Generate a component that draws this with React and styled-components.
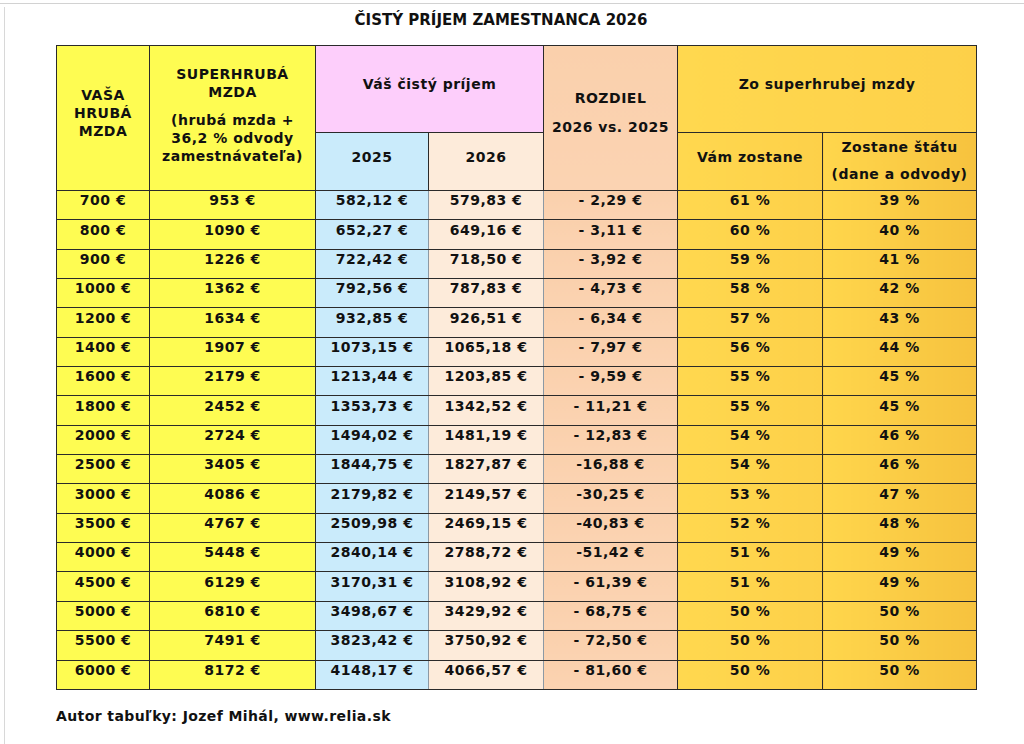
import React from "react";
import styled, { createGlobalStyle } from "styled-components";

const GlobalStyle = createGlobalStyle`
  body {
    margin: 0;
    background: #fff;
    font-family: "DejaVu Sans", Verdana, sans-serif;
    color: #111;
  }
`;

const colors = {
  yellow: "#FEFC52",
  pink: "#FDCEFB",
  blue: "#CAEBFB",
  cream: "#FDEBDA",
  peach: "linear-gradient(180deg, #FAD0AC, #FBD3B2)",
  gold: "linear-gradient(90deg, #FFD84F, #FDD049)",
  goldDark: "linear-gradient(90deg, #FFD64C, #F6C23E)",
};

const Frame = styled.div`
  margin-top: 3px;
  border-top: 1px solid #d2d2d2;
`;

const Sheet = styled.div`
  margin: 3px 0 0 4px;
  height: 737px;
  border-left: 1px solid #d8d8d8;
  padding-left: 51px;
  box-sizing: border-box;
`;

const Title = styled.h1`
  width: 890px;
  margin: 0;
  padding-top: 4px;
  margin-bottom: 16px;
  font-size: 15px;
  line-height: 18px;
  font-weight: bold;
  text-align: center;
`;

const Table = styled.table`
  width: 920px;
  table-layout: fixed;
  border-collapse: collapse;
  border: 1px solid #2a2a2a;
  font-size: 14px;
  font-weight: bold;
  letter-spacing: 0.5px;
`;

const HeadCell = styled.th`
  background: ${(p) => colors[p.$bg]};
  border: 1px solid #2a2a2a;
  height: ${(p) => p.$h || 47}px;
  padding: 0 4px ${(p) => (p.$pb !== undefined ? p.$pb : 10)}px;
  text-align: center;
  vertical-align: middle;
  font-size: 14px;
  line-height: ${(p) => p.$lh || 18}px;
`;

const Block = styled.div`
  & + & {
    margin-top: 10px;
  }
`;

const Cell = styled.td`
  background: ${(p) => colors[p.$bg]};
  border-top: 1px solid #2a2a2a;
  border-bottom: 1px solid #2a2a2a;
  border-left: 1px solid ${(p) => (p.$soft ? "#8c99a4" : "#2a2a2a")};
  height: 18.35px;
  padding: 0 0 10px;
  text-align: center;
  vertical-align: middle;
  line-height: 18px;
  white-space: nowrap;
`;

const Footer = styled.p`
  margin: 17px 0 0;
  font-size: 14px;
  line-height: 18px;
  font-weight: bold;
  letter-spacing: 0.4px;
`;

const rows = [
  ["700", "953", "582,12", "579,83", "- 2,29", 61, 39],
  ["800", "1090", "652,27", "649,16", "- 3,11", 60, 40],
  ["900", "1226", "722,42", "718,50", "- 3,92", 59, 41],
  ["1000", "1362", "792,56", "787,83", "- 4,73", 58, 42],
  ["1200", "1634", "932,85", "926,51", "- 6,34", 57, 43],
  ["1400", "1907", "1073,15", "1065,18", "- 7,97", 56, 44],
  ["1600", "2179", "1213,44", "1203,85", "- 9,59", 55, 45],
  ["1800", "2452", "1353,73", "1342,52", "- 11,21", 55, 45],
  ["2000", "2724", "1494,02", "1481,19", "- 12,83", 54, 46],
  ["2500", "3405", "1844,75", "1827,87", "-16,88", 54, 46],
  ["3000", "4086", "2179,82", "2149,57", "-30,25", 53, 47],
  ["3500", "4767", "2509,98", "2469,15", "-40,83", 52, 48],
  ["4000", "5448", "2840,14", "2788,72", "-51,42", 51, 49],
  ["4500", "6129", "3170,31", "3108,92", "- 61,39", 51, 49],
  ["5000", "6810", "3498,67", "3429,92", "- 68,75", 50, 50],
  ["5500", "7491", "3823,42", "3750,92", "- 72,50", 50, 50],
  ["6000", "8172", "4148,17", "4066,57", "- 81,60", 50, 50],
];

export default function App() {
  return (
    <React.Fragment>
      <GlobalStyle />
      <Frame>
        <Sheet>
          <Title>ČISTÝ PRÍJEM ZAMESTNANCA 2026</Title>
          <Table>
            <colgroup>
              <col style={{ width: 93 }} />
              <col style={{ width: 166 }} />
              <col style={{ width: 113 }} />
              <col style={{ width: 115 }} />
              <col style={{ width: 134 }} />
              <col style={{ width: 145 }} />
              <col style={{ width: 154 }} />
            </colgroup>
            <thead>
              <tr>
                <HeadCell rowSpan={2} $bg="yellow">
                  VAŠA
                  <br />
                  HRUBÁ
                  <br />
                  MZDA
                </HeadCell>
                <HeadCell rowSpan={2} $bg="yellow" $pb={6}>
                  <Block>
                    SUPERHRUBÁ
                    <br />
                    MZDA
                  </Block>
                  <Block>
                    (hrubá mzda +
                    <br />
                    36,2 % odvody
                    <br />
                    zamestnávateľa)
                  </Block>
                </HeadCell>
                <HeadCell colSpan={2} $bg="pink" $h={76}>
                  Váš čistý príjem
                </HeadCell>
                <HeadCell rowSpan={2} $bg="peach" $lh={29}>
                  ROZDIEL
                  <br />
                  2026 vs. 2025
                </HeadCell>
                <HeadCell colSpan={2} $bg="gold" $h={76}>
                  Zo superhrubej mzdy
                </HeadCell>
              </tr>
              <tr>
                <HeadCell $bg="blue">2025</HeadCell>
                <HeadCell $bg="cream">2026</HeadCell>
                <HeadCell $bg="gold">Vám zostane</HeadCell>
                <HeadCell $bg="goldDark" $lh={27} $pb={2} $h={54}>
                  Zostane štátu
                  <br />
                  (dane a odvody)
                </HeadCell>
              </tr>
            </thead>
            <tbody>
              {rows.map((r) => (
                <tr key={r[0]}>
                  <Cell $bg="yellow">{r[0]} €</Cell>
                  <Cell $bg="yellow">{r[1]} €</Cell>
                  <Cell $bg="blue">{r[2]} €</Cell>
                  <Cell $bg="cream" $soft>
                    {r[3]} €
                  </Cell>
                  <Cell $bg="peach" $soft>
                    {r[4]} €
                  </Cell>
                  <Cell $bg="gold">{r[5]} %</Cell>
                  <Cell $bg="goldDark">{r[6]} %</Cell>
                </tr>
              ))}
            </tbody>
          </Table>
          <Footer>Autor tabuľky: Jozef Mihál, www.relia.sk</Footer>
        </Sheet>
      </Frame>
    </React.Fragment>
  );
}
